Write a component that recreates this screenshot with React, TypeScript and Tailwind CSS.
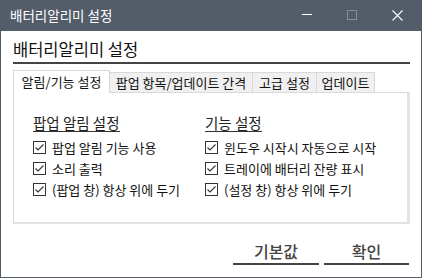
import React from "react";

function Check() {
  return (
    <svg width="13" height="13" viewBox="0 0 13 13" className="shrink-0">
      <rect x="0.5" y="0.5" width="12" height="12" fill="#fff" stroke="#333" />
      <polyline points="2.5,6.5 5,9 10.5,3.5" fill="none" stroke="#333" strokeWidth="1.1" />
    </svg>
  );
}

function Row({ label }: { label: string }) {
  return (
    <div className="flex h-[21px] items-center">
      <Check />
      <span className="ml-[6px] text-[13px] leading-[21px] text-[#111] whitespace-nowrap">{label}</span>
    </div>
  );
}

export default function App() {
  return (
    <div className="w-[422px] h-[278px] bg-[#535c69] flex flex-col px-[1px] pb-[1px] font-['Noto_Sans_CJK_KR',sans-serif] overflow-hidden">
      <div className="h-[31px] flex items-center shrink-0 relative">
        <span className="ml-[9px] text-[13.5px] text-white leading-none">배터리알리미 설정</span>
        <div className="absolute left-[301px] top-[14px] w-[10px] h-[1px] bg-white" />
        <div className="absolute left-[346px] top-[10px] w-[10px] h-[10px] border border-[#858d98]" />
        <svg className="absolute left-[391px] top-[10px]" width="11" height="11" viewBox="0 0 11 11">
          <path d="M0.5 0.5 L10.5 10.5 M10.5 0.5 L0.5 10.5" stroke="#fff" strokeWidth="1.1" />
        </svg>
      </div>
      <div className="flex-1 bg-white flex flex-col">
        <div className="ml-[12px] mr-[11px] h-[33px] border-b-2 border-[#444] flex items-end pb-[3px]">
          <span className="text-[16.5px] leading-[20px] text-[#111]">배터리알리미 설정</span>
        </div>
        <div className="ml-[12px] mt-[6px] h-[22px] flex items-end">
          <div className="w-[97px] h-[23px] -mb-[1px] relative z-10 bg-white border-l border-t border-r border-[#d9d9d9] flex items-start justify-center pt-[2px]">
            <span className="text-[13px] leading-[17px] text-[#111] whitespace-nowrap">알림/기능 설정</span>
          </div>
          <div className="w-[143px] h-[20px] bg-[#f0f0f0] border-t border-r border-[#d9d9d9] flex items-center justify-center">
            <span className="text-[13px] leading-[17px] text-[#111] whitespace-nowrap">팝업 항목/업데이트 간격</span>
          </div>
          <div className="w-[64px] h-[20px] bg-[#f0f0f0] border-t border-r border-[#d9d9d9] flex items-center justify-center">
            <span className="text-[13px] leading-[17px] text-[#111] whitespace-nowrap">고급 설정</span>
          </div>
          <div className="w-[58px] h-[20px] bg-[#f0f0f0] border-t border-r border-[#d9d9d9] flex items-center justify-center">
            <span className="text-[13px] leading-[17px] text-[#111] whitespace-nowrap">업데이트</span>
          </div>
        </div>
        <div className="ml-[12px] w-[397px] h-[132px] border-l border-t border-[#d9d9d9] border-r-[3px] border-b-[2px] border-r-[#e2e2e2] border-b-[#e2e2e2] flex pt-[17px] pl-[19px]">
          <div className="w-[172px] flex flex-col">
            <div className="h-[18px]">
              <span className="inline-block text-[14.5px] leading-[16px] text-[#222] border-b border-[#333] whitespace-nowrap">팝업 알림 설정</span>
            </div>
            <div className="mt-[9px] flex flex-col">
              <Row label="팝업 알림 기능 사용" />
              <Row label="소리 출력" />
              <Row label="(팝업 창) 항상 위에 두기" />
            </div>
          </div>
          <div className="flex flex-col">
            <div className="h-[18px]">
              <span className="inline-block text-[14.5px] leading-[16px] text-[#222] border-b border-[#333] whitespace-nowrap">기능 설정</span>
            </div>
            <div className="mt-[9px] flex flex-col">
              <Row label="윈도우 시작시 자동으로 시작" />
              <Row label="트레이에 배터리 잔량 표시" />
              <Row label="(설정 창) 항상 위에 두기" />
            </div>
          </div>
        </div>
        <div className="mt-[14px] mr-[12px] flex justify-end gap-[5px]">
          <div className="w-[86px] h-[27px] border-b-2 border-[#444] flex items-center justify-center">
            <span className="text-[16px] leading-[20px] text-[#444] font-medium">기본값</span>
          </div>
          <div className="w-[85px] h-[27px] border-b-2 border-[#444] flex items-center justify-center">
            <span className="text-[16px] leading-[20px] text-[#444] font-medium">확인</span>
          </div>
        </div>
      </div>
    </div>
  );
}
